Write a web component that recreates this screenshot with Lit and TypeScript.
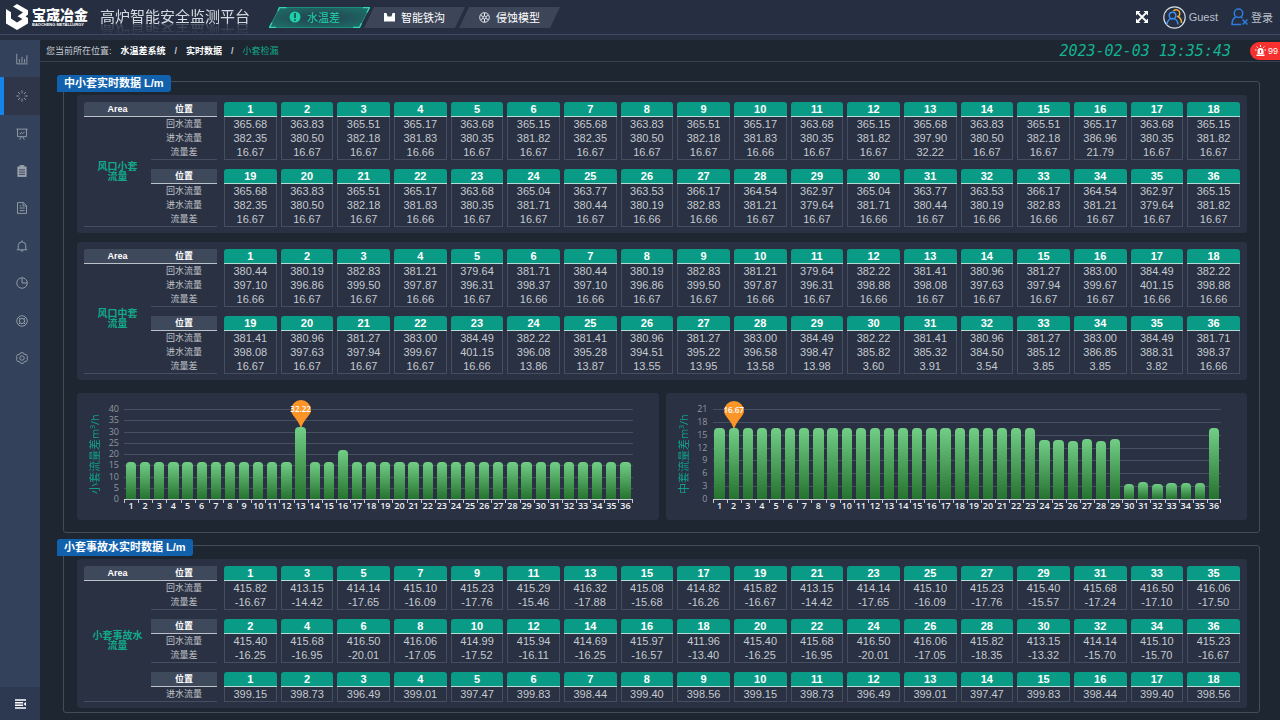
import { LitElement, html, css, svg, nothing, TemplateResult } from "lit";
import { customElement, property } from "lit/decorators.js";
import { classMap } from "lit/directives/class-map.js";
import { styleMap } from "lit/directives/style-map.js";

type Row = { label: string; values: string[] };
type Block = { heads: string[]; rows: Row[] };

const list = (s: string) => s.trim().split(/\s+/);
const range = (from: number, count: number, step = 1) =>
  Array.from({ length: count }, (_, i) => String(from + i * step));

const RET = "回水流量";
const INF = "进水流量";
const DIF = "流量差";

const smallBlocks: Block[] = [
  {
    heads: range(1, 18),
    rows: [
      { label: RET, values: list("365.68 363.83 365.51 365.17 363.68 365.15 365.68 363.83 365.51 365.17 363.68 365.15 365.68 363.83 365.51 365.17 363.68 365.15") },
      { label: INF, values: list("382.35 380.50 382.18 381.83 380.35 381.82 382.35 380.50 382.18 381.83 380.35 381.82 397.90 380.50 382.18 386.96 380.35 381.82") },
      { label: DIF, values: list("16.67 16.67 16.67 16.66 16.67 16.67 16.67 16.67 16.67 16.66 16.67 16.67 32.22 16.67 16.67 21.79 16.67 16.67") },
    ],
  },
  {
    heads: range(19, 18),
    rows: [
      { label: RET, values: list("365.68 363.83 365.51 365.17 363.68 365.04 363.77 363.53 366.17 364.54 362.97 365.04 363.77 363.53 366.17 364.54 362.97 365.15") },
      { label: INF, values: list("382.35 380.50 382.18 381.83 380.35 381.71 380.44 380.19 382.83 381.21 379.64 381.71 380.44 380.19 382.83 381.21 379.64 381.82") },
      { label: DIF, values: list("16.67 16.67 16.67 16.66 16.67 16.67 16.67 16.66 16.66 16.67 16.67 16.66 16.67 16.66 16.66 16.67 16.67 16.67") },
    ],
  },
];

const middleBlocks: Block[] = [
  {
    heads: range(1, 18),
    rows: [
      { label: RET, values: list("380.44 380.19 382.83 381.21 379.64 381.71 380.44 380.19 382.83 381.21 379.64 382.22 381.41 380.96 381.27 383.00 384.49 382.22") },
      { label: INF, values: list("397.10 396.86 399.50 397.87 396.31 398.37 397.10 396.86 399.50 397.87 396.31 398.88 398.08 397.63 397.94 399.67 401.15 398.88") },
      { label: DIF, values: list("16.66 16.67 16.67 16.66 16.67 16.66 16.66 16.67 16.67 16.66 16.67 16.66 16.67 16.67 16.67 16.67 16.66 16.66") },
    ],
  },
  {
    heads: range(19, 18),
    rows: [
      { label: RET, values: list("381.41 380.96 381.27 383.00 384.49 382.22 381.41 380.96 381.27 383.00 384.49 382.22 381.41 380.96 381.27 383.00 384.49 381.71") },
      { label: INF, values: list("398.08 397.63 397.94 399.67 401.15 396.08 395.28 394.51 395.22 396.58 398.47 385.82 385.32 384.50 385.12 386.85 388.31 398.37") },
      { label: DIF, values: list("16.67 16.67 16.67 16.67 16.66 13.86 13.87 13.55 13.95 13.58 13.98 3.60 3.91 3.54 3.85 3.85 3.82 16.66") },
    ],
  },
];

const emergencyBlocks: Block[] = [
  {
    heads: range(1, 18, 2),
    rows: [
      { label: RET, values: list("415.82 413.15 414.14 415.10 415.23 415.29 416.32 415.08 414.82 415.82 413.15 414.14 415.10 415.23 415.40 415.68 416.50 416.06") },
      { label: DIF, values: list("-16.67 -14.42 -17.65 -16.09 -17.76 -15.46 -17.88 -15.68 -16.26 -16.67 -14.42 -17.65 -16.09 -17.76 -15.57 -17.24 -17.10 -17.50") },
    ],
  },
  {
    heads: range(2, 18, 2),
    rows: [
      { label: RET, values: list("415.40 415.68 416.50 416.06 414.99 415.94 414.69 415.97 411.96 415.40 415.68 416.50 416.06 415.82 413.15 414.14 415.10 415.23") },
      { label: DIF, values: list("-16.25 -16.95 -20.01 -17.05 -17.52 -16.11 -16.25 -16.57 -13.40 -16.25 -16.95 -20.01 -17.05 -18.35 -13.32 -15.70 -15.70 -16.67") },
    ],
  },
  {
    heads: range(1, 18),
    rows: [
      { label: INF, values: list("399.15 398.73 396.49 399.01 397.47 399.83 398.44 399.40 398.56 399.15 398.73 396.49 399.01 397.47 399.83 398.44 399.40 398.56") },
    ],
  },
];

const diffs = (blocks: Block[]) =>
  blocks.flatMap((b) => b.rows[2].values.map(Number));

@customElement("flow-table")
class FlowTable extends LitElement {
  @property({ attribute: false }) area: string[] = [];
  @property({ attribute: false }) blocks: Block[] = [];

  static styles = css`
    :host {
      display: block;
      background: #293142;
      border-radius: 3px;
      padding: 7px 7px 6px;
    }
    table {
      width: 100%;
      table-layout: fixed;
      border-collapse: separate;
      border-spacing: 0;
    }
    th, td {
      padding: 0;
      font-weight: normal;
      text-align: center;
      height: 14px;
      line-height: 14px;
    }
    .c-area { width: 67px; }
    .c-pos { width: 66px; }
    .c-space { width: 3px; }
    .head {
      background: #3f495c;
      border-bottom: 1px solid #bcc1ca;
      color: #fff;
      font-size: 9px;
      font-weight: bold;
    }
    .first { border-top-left-radius: 3px; }
    .label { color: #c3c6cc; font-size: 9px; }
    .last { border-bottom: 1px solid #444e60; }
    .area {
      color: #12a88a;
      font-size: 10px;
      font-weight: bold;
      line-height: 10px;
      border-bottom: 1px solid #444e60;
      vertical-align: middle;
    }
    .area span { display: block; }
    .slot { padding-left: 4px; font-size: 11px; }
    .num {
      background: #0a9b86;
      border-bottom: 1px solid #b5dcd6;
      border-radius: 3px 3px 0 0;
      color: #fff;
      font-weight: bold;
    }
    .val {
      border: solid #444e60;
      border-width: 0 1px;
      color: #c6cad1;
    }
    .end { border-bottom-width: 1px; }
    .gap td { height: 9px; line-height: 9px; }
  `;

  render() {
    const span =
      this.blocks.reduce((n, b) => n + b.rows.length + 1, 0) +
      this.blocks.length - 2;
    return html`<table>
      <colgroup>
        <col class="c-area" /><col class="c-pos" /><col class="c-space" />
        <col span="18" />
      </colgroup>
      <tbody>
        ${this.blocks.map((b, i) => html`
          ${i ? html`<tr class="gap"><td colspan="20"></td></tr>` : nothing}
          <tr>
            ${i ? nothing : html`<th class="head first" scope="col">Area</th>`}
            <th class="head" scope="col">位置</th>
            <td></td>
            ${b.heads.map((h) => html`<th class="slot" scope="col"><div class="num">${h}</div></th>`)}
          </tr>
          ${b.rows.map((r, j) => {
            const last = j === b.rows.length - 1;
            return html`<tr>
              ${i === 0 && j === 0
                ? html`<th class="area" scope="rowgroup" rowspan=${span}>
                    ${this.area.map((t) => html`<span>${t}</span>`)}
                  </th>`
                : nothing}
              <th class=${classMap({ label: true, last })} scope="row">${r.label}</th>
              <td></td>
              ${r.values.map((v) => html`<td class="slot"><div class=${classMap({ val: true, end: last })}>${v}</div></td>`)}
            </tr>`;
          })}
        `)}
      </tbody>
    </table>`;
  }
}

@customElement("flow-chart")
class FlowChart extends LitElement {
  @property() name = "";
  @property({ attribute: false }) values: number[] = [];
  @property({ type: Number }) max = 40;
  @property({ type: Number }) step = 5;
  @property({ type: Number }) mark = 0;

  static styles = css`
    :host {
      display: grid;
      grid-template-columns: 25px 12px minmax(0, 1fr);
      column-gap: 5px;
      background: #293142;
      border-radius: 3px;
      padding: 16px 26px 9px 0;
      height: 102px;
      font-family: "Open Sans", "Noto Sans CJK SC", sans-serif;
    }
    .name {
      writing-mode: vertical-rl;
      text-orientation: sideways;
      transform: rotate(180deg);
      font-size: 11px;
      line-height: 14px;
      color: #0f9f8c;
      text-align: center;
      height: 91px;
      justify-self: end;
    }
    .y {
      display: flex;
      flex-direction: column-reverse;
      justify-content: space-between;
      height: 91px;
      text-align: right;
      font-size: 9px;
      color: #9298a4;
    }
    .y span { height: 1px; line-height: 0; }
    .plot { display: grid; grid-template-rows: 91px auto; }
    .lines, .bars { grid-area: 1 / 1; }
    .lines {
      display: flex;
      flex-direction: column;
      justify-content: space-between;
    }
    .lines i { height: 1px; background: #465062; }
    .lines i:last-child { background: #c5cad3; }
    .bars { display: flex; padding-bottom: 1px; }
    .slot { flex: 1; display: flex; align-items: flex-end; justify-content: center; }
    .bar {
      position: relative;
      width: 72%;
      border-radius: 4px 4px 0 0;
      background: linear-gradient(#72ce86, #25732f);
    }
    .pin {
      position: absolute;
      left: 50%;
      bottom: 100%;
      width: 22px;
      height: 28px;
      margin-left: -11px;
      color: #fff;
      font-size: 8px;
      font-weight: 600;
      line-height: 20px;
      display: grid;
      justify-items: center;
    }
    .pin svg, .pin span { grid-area: 1 / 1; }
    .x { display: flex; }
    .x span {
      flex: 1;
      min-width: 0;
      display: flex;
      justify-content: center;
      color: #f0f2f5;
      font-size: 9px;
      font-weight: 600;
      line-height: 11px;
      background: linear-gradient(#c5cad3, #c5cad3) 0 0 / 1px 3px no-repeat;
    }
    .x span:last-child {
      background:
        linear-gradient(#c5cad3, #c5cad3) 0 0 / 1px 3px no-repeat,
        linear-gradient(#c5cad3, #c5cad3) 100% 0 / 1px 3px no-repeat;
    }
  `;

  render() {
    const ticks = Array.from({ length: this.max / this.step + 1 }, (_, i) => i * this.step);
    return html`
      <div class="name">${this.name}</div>
      <div class="y">${ticks.map((t) => html`<span>${t}</span>`)}</div>
      <div class="plot">
        <div class="lines">${ticks.map(() => html`<i></i>`)}</div>
        <div class="bars">
          ${this.values.map((v, i) => html`<div class="slot">
            <div class="bar" style=${styleMap({ height: `${(v / this.max) * 100}%` })}>
              ${i + 1 === this.mark
                ? html`<div class="pin">
                    <svg width="22" height="28" viewBox="0 0 22 28">
                      <path fill="#fb9527" d="M11 1a10 10 0 0 1 10 10c0 5-7 9-9.4 17h-1.2C8 20 1 16 1 11A10 10 0 0 1 11 1z" />
                    </svg>
                    <span>${v.toFixed(2)}</span>
                  </div>`
                : nothing}
            </div>
          </div>`)}
        </div>
        <div class="x">${this.values.map((_, i) => html`<span>${i + 1}</span>`)}</div>
      </div>
    `;
  }
}

const line = (body: TemplateResult, size = 12) =>
  html`<svg width=${size} height=${size} viewBox="0 0 16 16" fill="none" stroke="currentColor" stroke-width="1.2">${body}</svg>`;

const menu: { name: string; icon: TemplateResult }[] = [
  { name: "统计", icon: svg`<path d="M1 1v13.5h14.5M4.5 13V8M8 13V5M11.500 13V8M14.500 13V3" />` },
  { name: "水温差", icon: svg`<path d="M8 .5v4M8 11.500v4M.5 8h4M11.500 8h4M2.700 2.700l2.800 2.800M10.500 10.500l2.800 2.800M13.300 2.700l-2.800 2.800M5.500 10.500l-2.800 2.800" />` },
  { name: "看板", icon: svg`<path d="M.5 1.500h15M2 1.500v10h12v-10M5 8.500l2-2.500 2 1.500 2.500-2.500M5 15.500l2-4M11 15.500l-2-4" />` },
  { name: "记录", icon: svg`<path fill="currentColor" d="M2.500 2.500h11v13h-11zM5.500.5h5v3h-5z" /><path stroke="#33425a" d="M4 6.500h8M4 9.500h8M4 12.500h8" />` },
  { name: "报表", icon: svg`<path d="M2 .8h8l4 4v10.400H2zM9.500.8v4.500h4.500M5 8h6.500M5 11.500h6.500M5 5h2" />` },
  { name: "告警", icon: svg`<path d="M1 13h14M3 13V7.500a5 5 0 0 1 10 0V13M8 .5v2M6.500 13.500a1.500 1.500 0 0 0 3 0" />` },
  { name: "分析", icon: svg`<path d="M8 1A7 7 0 1 0 15 8H8z" /><path d="M8 1a7 7 0 0 1 7 7" />` },
  { name: "帮助", icon: svg`<circle cx="8" cy="8" r="7" /><circle cx="8" cy="8" r="3.500" /><path d="M3 3l2.500 2.500M13 3l-2.500 2.500M3 13l2.500-2.500M13 13l-2.500-2.500" />` },
  { name: "设置", icon: svg`<path d="M5.500 2.500L6.200 1h3.600l.7 1.500 1.500.9 1.700-.2 1.800 3.100-1 1.700 1 1.700-1.800 3.100-1.700-.2-1.500.9-.7 1.500H6.200l-.7-1.500-1.500-.9-1.700.2L.5 9.700 1.500 8l-1-1.700 1.800-3.100 1.700.2z" /><circle cx="8" cy="8" r="3" />` },
];

@customElement("app-root")
class AppRoot extends LitElement {
  static styles = css`
    :host {
      display: flex;
      flex-direction: column;
      min-height: 100vh;
      background: #1d2631;
      color: #fff;
      font-family: "Liberation Sans", "Noto Sans CJK SC", sans-serif;
      font-size: 11px;
    }
    a { color: inherit; text-decoration: none; }
    button {
      border: 0;
      padding: 0;
      background: none;
      color: inherit;
      font: inherit;
      cursor: pointer;
    }
    svg { display: block; flex: none; }

    .top {
      display: flex;
      align-items: center;
      height: 34px;
      padding: 0 7px 0 6px;
      background: #262f42;
      border-bottom: 1px solid #3b4a66;
    }
    .edge { height: 5px; background: #263042; }
    .brand { display: flex; align-items: center; gap: 4px; width: 94px; }
    .words { display: flex; flex-direction: column; gap: 1px; }
    .cn {
      font-family: "Noto Sans CJK SC", sans-serif;
      font-weight: 900;
      font-size: 14px;
      line-height: 13px;
    }
    .en { font-weight: bold; font-size: 4px; line-height: 5px; white-space: nowrap; }
    h1 {
      margin: 0;
      font-size: 15px;
      font-weight: normal;
      line-height: 18px;
      color: #d7dbe2;
      white-space: nowrap;
      -webkit-box-reflect: below -5px linear-gradient(transparent 20%, rgba(0, 0, 0, 0.3));
    }
    .tabs { display: flex; margin-left: 19px; margin-right: auto; }
    .tab {
      position: relative;
      display: flex;
      align-items: center;
      gap: 6px;
      width: 81px;
      height: 21px;
      padding-left: 20px;
      margin-right: -6px;
      white-space: nowrap;
    }
    .tab svg, .tab span { position: relative; }
    .tab .shape { position: absolute; inset: 0; }
    .tab.on { color: #1ed0a9; }

    .tools { display: flex; align-items: center; color: #b9c0cc; }
    .tool { display: flex; align-items: center; gap: 3px; }
    .full { margin-right: 15px; }
    .user { margin-right: 13px; }

    .body { display: flex; flex: 1; }
    .side {
      display: flex;
      flex-direction: column;
      width: 40px;
      flex: none;
      background: #33425a;
      color: #98a0ac;
    }
    .menu { display: grid; grid-auto-rows: 1fr; height: 337px; }
    .item {
      display: grid;
      place-items: center;
      border-left: 4px solid transparent;
      padding-right: 1px;
    }
    .item.on { background: #30364a; border-left-color: #1683e6; }
    .fold {
      margin-top: auto;
      height: 33px;
      background: #2d3950;
      display: grid;
      place-items: center;
      color: #fff;
    }

    main { flex: 1; min-width: 0; }
    .bar {
      display: flex;
      align-items: center;
      height: 21px;
      padding-left: 6px;
      border-bottom: 1px solid #36414d;
    }
    .crumbs { display: flex; align-items: center; gap: 9px; font-size: 9px; color: #c9cdd4; }
    .crumbs a { font-weight: bold; color: #fff; }
    .crumbs .here { color: #14a88b; font-weight: normal; }
    .bar time {
      margin-left: auto;
      margin-right: 19px;
      font-family: "DejaVu Sans Mono", monospace;
      font-style: italic;
      font-size: 15px;
      line-height: 20px;
      color: #13b491;
      white-space: pre;
    }
    .alarm {
      display: flex;
      align-items: center;
      gap: 2px;
      width: 30px;
      height: 18px;
      padding-left: 5px;
      box-sizing: border-box;
      border-radius: 9px 0 0 9px;
      background: #f5302f;
      font-size: 9px;
      color: #fff;
    }

    .panel {
      position: relative;
      margin: 19px 20px 0 23px;
      padding: 13px 12px 12px 13px;
      border: 1px solid #434d59;
      border-radius: 3px;
      display: flex;
      flex-direction: column;
      gap: 9px;
    }
    .panel + .panel { margin-top: 12px; margin-bottom: 7px; padding-bottom: 4px; }
    h2 {
      position: absolute;
      top: -7px;
      left: -7px;
      margin: 0;
      padding: 0 7px;
      border-radius: 3px 3px 3px 0;
      background: #1161ad;
      font-size: 11px;
      line-height: 17px;
      white-space: nowrap;
    }
    .charts {
      display: grid;
      grid-template-columns: 1fr 1fr;
      gap: 7px;
      margin-top: 4px;
    }
  `;

  private tab(on: boolean, icon: TemplateResult, text: string) {
    return html`<a class=${classMap({ tab: true, on })} href="#">
      <svg class="shape" width="101" height="21" viewBox="0 0 101 21">
        ${on
          ? svg`<defs>
              <radialGradient id="g" cx=".5" cy=".5" r=".6">
                <stop offset="0" stop-color="#253f4d" /><stop offset="1" stop-color="#1d6c69" />
              </radialGradient></defs>
            <path d="M10.500.5h90l-10 20h-90z" fill="url(#g)" stroke="#1f8b7c" />
            <path d="M9 4l1.500-3.500h7M94 .5h6.500L98 5.500M92.500 16l-2 4.500H84M7 20.500H.5L3 15.500" fill="none" stroke="#35d8b4" stroke-width="1.300" />`
          : svg`<path d="M10 0h91l-10 21H0z" fill="#3d4659" />`}
      </svg>
      ${icon}<span>${text}</span>
    </a>`;
  }

  render() {
    return html`
      <header class="top">
        <div class="brand">
          <svg width="22" height="26" viewBox="0 0 22 26" fill="#fff">
            <path d="M0 5l5 3.200v6.300l6 4 5.500-3.500-5-2.800 5.500-3.700-10-6L11 0l11 6.300v4.200l-2.500 2 2.500 1.500v5.500L11 26 0 19.500z" />
          </svg>
          <div class="words">
            <span class="cn">宝宬冶金</span>
            <span class="en">BAOCHENG METALLURGY</span>
          </div>
        </div>
        <h1>高炉智能安全监测平台</h1>
        <nav class="tabs">
          ${this.tab(true, html`<svg width="12" height="12" viewBox="0 0 12 12"><circle cx="6" cy="6" r="5.500" fill="#1ed0a9" /><path d="M6 2v5M6 8.200v1.600" stroke="#22404c" stroke-width="1.600" /></svg>`, "水温差")}
          ${this.tab(false, html`<svg width="11" height="12" viewBox="0 0 11 12"><path d="M0 2h2.500l1 3.500h4l1-3.500H11v8.500H0z" fill="#fff" /></svg>`, "智能铁沟")}
          ${this.tab(false, html`<svg width="11" height="11" viewBox="0 0 11 11" fill="none" stroke="#e6e9ee"><circle cx="5.500" cy="5.500" r="4.800" /><circle cx="5.500" cy="5.500" r="1.500" /><path d="M5.500 1v3M5.500 7v3M1.600 3.200l2.600 1.500M6.800 6.300l2.600 1.500M1.600 7.800l2.600-1.500M6.800 4.700l2.600-1.500" /></svg>`, "侵蚀模型")}
        </nav>
        <div class="tools">
          <button class="tool full" aria-label="全屏">
            <svg width="12" height="12" viewBox="0 0 12 12" fill="#fff" stroke="#fff">
              <path d="M2 2l8 8M10 2l-8 8" stroke-width="1.800" />
              <path stroke="none" d="M0 0h4.500L0 4.500zM12 0v4.500L7.500 0zM0 12V7.500L4.500 12zM12 12H7.500L12 7.500z" />
            </svg>
          </button>
          <button class="tool user">
            <svg width="23" height="23" viewBox="0 0 23 23" fill="none" stroke-width="1.500">
              <circle cx="11.500" cy="11.500" r="10.700" stroke="#d5dae2" stroke-width="1.200" />
              <path d="M10.500 5a3.600 3.600 0 1 1 4.500 5.500c2 1 3.500 3.500 3.500 6.500" stroke="#eeb03c" />
              <circle cx="9.500" cy="9.500" r="3.300" stroke="#3c8df0" />
              <path d="M4 18.500c.5-8 10.500-8 11 0" stroke="#3c8df0" />
            </svg>
            Guest
          </button>
          <button class="tool">
            <svg width="17" height="18" viewBox="0 0 17 18" fill="none" stroke="#2f7cdc" stroke-width="1.500">
              <circle cx="7.500" cy="5.200" r="4.200" />
              <path d="M4.800 9C2 10.500 1 13 1 16.500h9M9.800 9l1.700 1.200M11.500 11.500l5 5M16.500 11.500l-5 5" />
            </svg>
            登录
          </button>
        </div>
      </header>
      <div class="edge"></div>

      <div class="body">
        <aside class="side">
          <nav class="menu">
            ${menu.map((m, i) => html`<a class=${classMap({ item: true, on: i === 1 })} href="#" aria-label=${m.name}>${line(m.icon)}</a>`)}
          </nav>
          <button class="fold" aria-label="收起菜单">
            <svg width="11" height="10" viewBox="0 0 11 10" stroke="#fff" stroke-width="1.500">
              <path d="M0 1h11M0 3.700h8M0 6.300h8M0 9h11" /><path d="M8.500 5L11 3v4z" fill="#fff" stroke="none" />
            </svg>
          </button>
        </aside>

        <main>
          <div class="bar">
            <nav class="crumbs">
              <span>您当前所在位置:</span>
              <a href="#">水温差系统</a><b>/</b>
              <a href="#">实时数据</a><b>/</b>
              <a class="here" href="#">小套检漏</a>
            </nav>
            <time datetime="2023-02-03T13:35:43">2023-02-03 13:35:43</time>
            <button class="alarm">
              <svg width="11" height="11" viewBox="0 0 11 11" fill="#fff">
                <path d="M1.500 9.500h8V11h-8zM2.500 9V6a3 3 0 0 1 6 0v3z" />
                <path d="M5.500 0v2M1.500 1.500l1.300 1.300M9.500 1.500L8.200 2.800M0 5h1.500M9.500 5H11" stroke="#fff" />
                <path d="M5.500 5v3" stroke="#f5302f" stroke-width="1.200" />
              </svg>
              99
            </button>
          </div>

          <section class="panel">
            <h2>中小套实时数据 L/m</h2>
            <flow-table .area=${["风口小套", "流量"]} .blocks=${smallBlocks}></flow-table>
            <flow-table .area=${["风口中套", "流量"]} .blocks=${middleBlocks}></flow-table>
            <div class="charts">
              <flow-chart name="小套流量差m³/h" max="40" step="5" mark="13" .values=${diffs(smallBlocks)}></flow-chart>
              <flow-chart name="中套流量差m³/h" max="21" step="3" mark="2" .values=${diffs(middleBlocks)}></flow-chart>
            </div>
          </section>

          <section class="panel">
            <h2>小套事故水实时数据 L/m</h2>
            <flow-table .area=${["小套事故水", "流量"]} .blocks=${emergencyBlocks}></flow-table>
          </section>
        </main>
      </div>
    `;
  }
}
